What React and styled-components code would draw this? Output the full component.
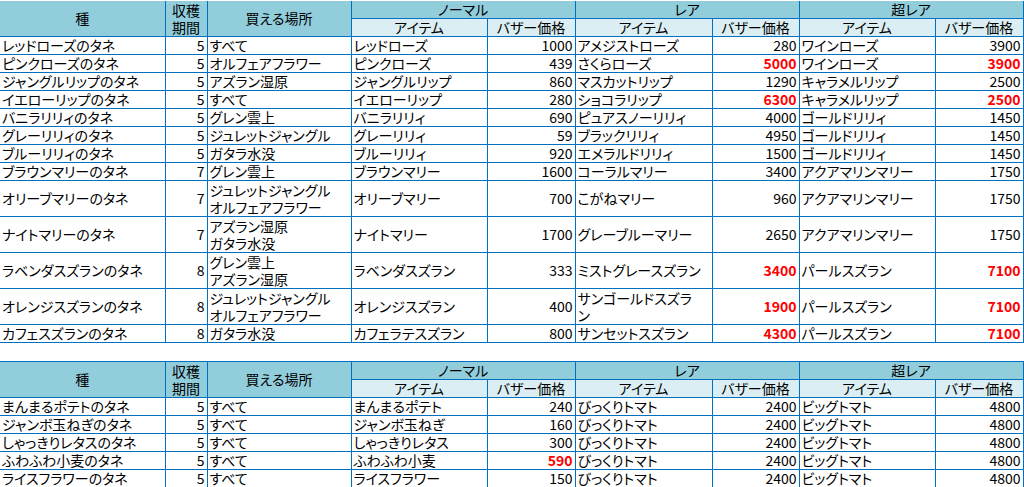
import React from "react";
import styled, { createGlobalStyle } from "styled-components";

const GlobalStyle = createGlobalStyle`
  body {
    margin: 0;
    background: #fff;
    font-family: "Noto Sans CJK JP", "Noto Sans", sans-serif;
    font-feature-settings: "palt";
    color: #000;
  }
`;

const Page = styled.div`
  display: flex;
  flex-direction: column;
  gap: 18px;
  padding-top: 1px;
`;

const Table = styled.table`
  border-collapse: collapse;
  table-layout: fixed;
  width: 1023px;
  font-size: 14px;
  line-height: 17px;
  border-top: ${(p) => (p.$top ? "1px solid #0070c0" : "none")};
`;

const HeadCell = styled.th`
  background: ${(p) => (p.$sub ? "#daeef3" : "#92cddc")};
  font-weight: normal;
  text-align: center;
  vertical-align: middle;
  padding: 0;
  height: 17px;
  border: 1px solid #0070c0;
  border-top: none;
  &:first-child {
    border-left: none;
  }
`;

const Cell = styled.td`
  text-align: ${(p) => (p.$num ? "right" : "left")};
  vertical-align: middle;
  padding: 0 ${(p) => (p.$num ? "2px" : "0")} 0 ${(p) => (p.$num ? "0" : "2px")};
  height: ${(p) => (p.$tall ? "35px" : "17px")};
  border: 1px solid #0070c0;
  white-space: nowrap;
  color: ${(p) => (p.$red ? "#ff0000" : "#000")};
  font-weight: ${(p) => (p.$red ? "bold" : "normal")};
  &:first-child {
    border-left: none;
  }
`;

const widths = [165, 42, 144, 136, 88, 137, 87, 136, 88];

const lines = (t) =>
  t.split("/").map((s, i) => (
    <React.Fragment key={i}>
      {i > 0 && <br />}
      {s}
    </React.Fragment>
  ));

const flowers = [
  ["レッドローズのタネ", 5, "すべて", "レッドローズ", "1000", "アメジストローズ", "280", "ワインローズ", "3900"],
  ["ピンクローズのタネ", 5, "オルフェアフラワー", "ピンクローズ", "439", "さくらローズ", "!5000", "ワインローズ", "!3900"],
  ["ジャングルリップのタネ", 5, "アズラン湿原", "ジャングルリップ", "860", "マスカットリップ", "1290", "キャラメルリップ", "2500"],
  ["イエローリップのタネ", 5, "すべて", "イエローリップ", "280", "ショコラリップ", "!6300", "キャラメルリップ", "!2500"],
  ["バニラリリィのタネ", 5, "グレン雲上", "バニラリリィ", "690", "ピュアスノーリリィ", "4000", "ゴールドリリィ", "1450"],
  ["グレーリリィのタネ", 5, "ジュレットジャングル", "グレーリリィ", "59", "ブラックリリィ", "4950", "ゴールドリリィ", "1450"],
  ["ブルーリリィのタネ", 5, "ガタラ水没", "ブルーリリィ", "920", "エメラルドリリィ", "1500", "ゴールドリリィ", "1450"],
  ["ブラウンマリーのタネ", 7, "グレン雲上", "ブラウンマリー", "1600", "コーラルマリー", "3400", "アクアマリンマリー", "1750"],
  ["オリーブマリーのタネ", 7, "ジュレットジャングル/オルフェアフラワー", "オリーブマリー", "700", "こがねマリー", "960", "アクアマリンマリー", "1750"],
  ["ナイトマリーのタネ", 7, "アズラン湿原/ガタラ水没", "ナイトマリー", "1700", "グレーブルーマリー", "2650", "アクアマリンマリー", "1750"],
  ["ラベンダスズランのタネ", 8, "グレン雲上/アズラン湿原", "ラベンダスズラン", "333", "ミストグレースズラン", "!3400", "パールスズラン", "!7100"],
  ["オレンジスズランのタネ", 8, "ジュレットジャングル/オルフェアフラワー", "オレンジスズラン", "400", "サンゴールドスズラ/ン", "!1900", "パールスズラン", "!7100"],
  ["カフェスズランのタネ", 8, "ガタラ水没", "カフェラテスズラン", "800", "サンセットスズラン", "!4300", "パールスズラン", "!7100"],
];

const crops = [
  ["まんまるポテトのタネ", 5, "すべて", "まんまるポテト", "240", "びっくりトマト", "2400", "ビッグトマト", "4800"],
  ["ジャンボ玉ねぎのタネ", 5, "すべて", "ジャンボ玉ねぎ", "160", "びっくりトマト", "2400", "ビッグトマト", "4800"],
  ["しゃっきりレタスのタネ", 5, "すべて", "しゃっきりレタス", "300", "びっくりトマト", "2400", "ビッグトマト", "4800"],
  ["ふわふわ小麦のタネ", 5, "すべて", "ふわふわ小麦", "!590", "びっくりトマト", "2400", "ビッグトマト", "4800"],
  ["ライスフラワーのタネ", 5, "すべて", "ライスフラワー", "150", "びっくりトマト", "2400", "ビッグトマト", "4800"],
];

const numCols = [1, 4, 6, 8];

const SeedTable = ({ rows, top }) => (
  <Table $top={top}>
    <colgroup>
      {widths.map((w, i) => (
        <col key={i} style={{ width: w }} />
      ))}
    </colgroup>
    <thead>
      <tr>
        <HeadCell rowSpan={2}>種</HeadCell>
        <HeadCell rowSpan={2}>
          収穫
          <br />
          期間
        </HeadCell>
        <HeadCell rowSpan={2}>買える場所</HeadCell>
        <HeadCell colSpan={2}>ノーマル</HeadCell>
        <HeadCell colSpan={2}>レア</HeadCell>
        <HeadCell colSpan={2}>超レア</HeadCell>
      </tr>
      <tr>
        {["ノーマル", "レア", "超レア"].map((k) => (
          <React.Fragment key={k}>
            <HeadCell $sub>アイテム</HeadCell>
            <HeadCell $sub>バザー価格</HeadCell>
          </React.Fragment>
        ))}
      </tr>
    </thead>
    <tbody>
      {rows.map((r) => {
        const tall = r.some((v) => String(v).includes("/"));
        return (
          <tr key={r[0]}>
            {r.map((v, i) => {
              const s = String(v);
              const red = s.startsWith("!");
              const txt = red ? s.slice(1) : s;
              return (
                <Cell key={i} $num={numCols.includes(i)} $red={red} $tall={tall}>
                  {lines(txt)}
                </Cell>
              );
            })}
          </tr>
        );
      })}
    </tbody>
  </Table>
);

export default function App() {
  return (
    <>
      <GlobalStyle />
      <Page>
        <SeedTable rows={flowers} />
        <SeedTable rows={crops} top />
      </Page>
    </>
  );
}
